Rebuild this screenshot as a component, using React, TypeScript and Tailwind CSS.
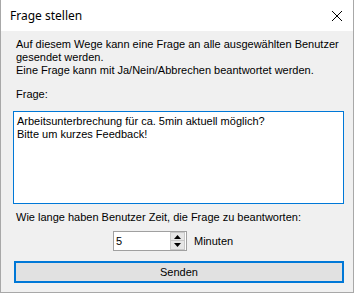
import React from "react";

export default function App() {
  const body = { fontFamily: '"Liberation Sans", Arial, sans-serif' };
  return (
    <div className="w-[354px] h-[293px] flex flex-col bg-[#f0f0f0] border-x border-b border-[#a8a8a8] text-black" style={body}>
      <div className="h-[31px] bg-white flex items-center justify-between pl-[9px] pr-[9px] shrink-0">
        <span className="text-[12px] leading-none" style={{ fontFamily: '"Noto Sans", "Open Sans", sans-serif' }}>
          Frage stellen
        </span>
        <svg width="12" height="12" viewBox="0 0 12 12" className="mr-[1px]">
          <path d="M1 1 L11 11 M11 1 L1 11" stroke="#000" strokeWidth="1" />
        </svg>
      </div>
      <div className="flex flex-col pt-[7px] text-[11px] leading-[13px]">
        <div className="pl-[15px] pr-[12px]">
          <p>Auf diesem Wege kann eine Frage an alle ausgewählten Benutzer</p>
          <p>gesendet werden.</p>
          <p>Eine Frage kann mit Ja/Nein/Abbrechen beantwortet werden.</p>
        </div>
        <p className="pl-[15px] mt-[11px]">Frage:</p>
        <div className="ml-[12px] mt-[10px] w-[331px] h-[93px] bg-white border border-[#0078d7] px-[3px] pt-[3px]">
          <p>Arbeitsunterbrechung für ca. 5min aktuell möglich?</p>
          <p>Bitte um kurzes Feedback!</p>
        </div>
        <p className="pl-[15px] mt-[7px]">Wie lange haben Benutzer Zeit, die Frage zu beantworten:</p>
        <div className="flex items-center mt-[7px] pl-[112px]">
          <div className="w-[74px] h-[20px] bg-white border border-[#a0a0a0] flex items-center">
            <span className="pl-[2px] flex-1">5</span>
            <div className="w-[15px] h-[18px] flex flex-col mr-[1px]">
              <div className="h-[9px] bg-[#e6e6e6] border border-[#c8c8c8] flex items-center justify-center">
                <svg width="7" height="4" viewBox="0 0 7 4"><path d="M0 4 L3.5 0 L7 4 Z" fill="#000" /></svg>
              </div>
              <div className="h-[9px] bg-[#e6e6e6] border border-[#c8c8c8] border-t-0 flex items-center justify-center">
                <svg width="7" height="4" viewBox="0 0 7 4"><path d="M0 0 L3.5 4 L7 0 Z" fill="#000" /></svg>
              </div>
            </div>
          </div>
          <span className="ml-[7px]">Minuten</span>
        </div>
        <div className="ml-[13px] mt-[10px] w-[330px] h-[22px] bg-[#e1e1e1] border-2 border-[#0078d7] flex items-center justify-center">
          Senden
        </div>
      </div>
    </div>
  );
}
